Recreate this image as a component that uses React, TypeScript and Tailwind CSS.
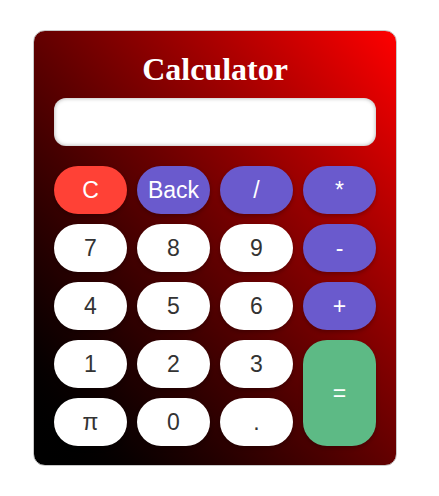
import React from "react";

// 계산기 키 정의
type Key = { label: string; kind: "num" | "op" | "clear" | "eq"; tall?: boolean };

const keys: Key[] = [
  { label: "C", kind: "clear" },
  { label: "Back", kind: "op" },
  { label: "/", kind: "op" },
  { label: "*", kind: "op" },
  { label: "7", kind: "num" },
  { label: "8", kind: "num" },
  { label: "9", kind: "num" },
  { label: "-", kind: "op" },
  { label: "4", kind: "num" },
  { label: "5", kind: "num" },
  { label: "6", kind: "num" },
  { label: "+", kind: "op" },
  { label: "1", kind: "num" },
  { label: "2", kind: "num" },
  { label: "3", kind: "num" },
  { label: "=", kind: "eq", tall: true },
  { label: "π", kind: "num" },
  { label: "0", kind: "num" },
  { label: ".", kind: "num" },
];

const kindClass: Record<Key["kind"], string> = {
  num: "bg-white text-[#333]",
  op: "bg-[#6a5acd] text-white",
  clear: "bg-[#ff4136] text-white",
  eq: "bg-[#5dba85] text-white",
};

export default function App() {
  return (
    <div className="min-h-screen bg-white pt-[30px]">
      <div className="ml-[33px] w-[364px] rounded-[12px] border border-[#c8c8c8] bg-gradient-to-tr from-black to-[#ff0000] px-5 pt-5 pb-[19px]">
        <h2
          className="mb-[11px] text-center text-[32px] font-bold leading-[36px] text-white"
          style={{ fontFamily: '"Liberation Serif", serif' }}
        >
          Calculator
        </h2>

        <input
          type="text"
          readOnly
          className="mb-5 block h-12 w-full rounded-[12px] bg-white shadow-[inset_0_0_4px_rgba(0,0,0,0.35)] outline-none"
        />

        <div
          className="grid grid-cols-4 gap-[10px]"
          style={{ fontFamily: '"Liberation Sans", Arial, sans-serif' }}
        >
          {keys.map((k) => (
            <button
              key={k.label}
              className={`flex items-center justify-center rounded-[24px] text-[23px] shadow-[0_2px_4px_rgba(0,0,0,0.25)] ${
                k.tall ? "row-span-2 h-[106px]" : "h-12"
              } ${kindClass[k.kind]}`}
            >
              {k.label}
            </button>
          ))}
        </div>
      </div>
    </div>
  );
}
